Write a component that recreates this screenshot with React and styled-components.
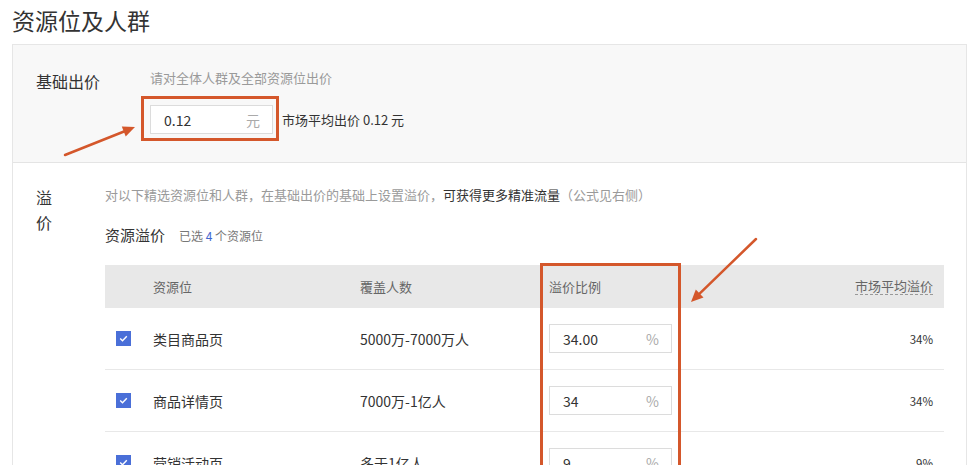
import React from "react";
import styled, { createGlobalStyle } from "styled-components";

const Global = createGlobalStyle`
  html, body { margin: 0; padding: 0; background: #fff; overflow: hidden; }
  body { font-family: "Noto Sans CJK SC", "Noto Sans", sans-serif; color: #333; }
  * { box-sizing: border-box; }
`;

const Page = styled.div`
  position: relative;
  width: 974px;
  height: 465px;
  padding: 4px 8px 0 12px;
`;

const Title = styled.h1`
  margin: 0 0 8px;
  font-size: 23px;
  line-height: 32px;
  font-weight: 400;
  color: #333;
`;

const Panel = styled.div`
  width: 955px;
  border: 1px solid #e6e6e6;
  border-bottom: none;
`;

const BaseSection = styled.div`
  display: grid;
  grid-template-columns: 114px 1fr;
  background: #f8f8f8;
  border-bottom: 1px solid #e4e4e4;
  padding: 24px 0 28px 23px;
`;

const Label = styled.div`
  font-size: 16px;
  line-height: 24px;
  color: #333;
`;

const VLabel = styled.div`
  font-size: 16px;
  line-height: 25px;
  width: 16px;
  color: #333;
`;

const Hint = styled.div`
  font-size: 13px;
  line-height: ${(p) => p.$lh || 18}px;
  color: #9a9a9a;
`;

const Strong = styled.span`
  color: #333;
`;

const InputRow = styled.div`
  display: flex;
  align-items: center;
  gap: 9px;
  margin-top: 18px;
`;

const InputBox = styled.div`
  display: flex;
  align-items: center;
  justify-content: space-between;
  width: ${(p) => p.$w || 123}px;
  height: 29px;
  border: 1px solid #dcdcdc;
  background: #fff;
  padding: 0 12px 0 13px;
  font-size: 14px;
  color: #333;
`;

const Unit = styled.span`
  color: #aaa;
  font-size: 14px;
`;

const MarketText = styled.span`
  font-size: 13px;
  color: #333;
`;

const PremiumSection = styled.div`
  display: grid;
  grid-template-columns: 69px 1fr;
  padding: 22px 21px 0 23px;
`;

const SubHead = styled.div`
  display: flex;
  align-items: baseline;
  gap: 14px;
  margin-top: 20px;
  line-height: 20px;
`;

const SubTitle = styled.span`
  font-size: 15px;
  color: #333;
`;

const SubNote = styled.span`
  font-size: 12px;
  color: #777;
`;

const Blue = styled.span`
  color: #3f66d0;
`;

const Table = styled.div`
  margin-top: 19px;
  width: 839px;
`;

const RowGrid = styled.div`
  display: grid;
  grid-template-columns: 48px 207px 189px 1fr auto;
  align-items: center;
  padding-right: 11px;
`;

const HeadRow = styled(RowGrid)`
  height: 43px;
  background: #e8e8e8;
  font-size: 13px;
  color: #666;
`;

const BodyRow = styled(RowGrid)`
  height: 62px;
  border-bottom: 1px solid #e8e8e8;
  font-size: 14px;
  color: #333;
`;

const Dashed = styled.span`
  border-bottom: 1px dashed #999;
  line-height: 16px;
`;

const Pct = styled.span`
  font-size: 11.5px;
  color: #333;
`;

const CheckCell = styled.div`
  display: flex;
  justify-content: flex-start;
  padding-left: 11px;
`;

const Checkbox = styled.span`
  display: inline-flex;
  align-items: center;
  justify-content: center;
  width: 15px;
  height: 15px;
  background: #4a6fd8;
`;

const Overlay = styled.svg`
  position: absolute;
  left: 0;
  top: 0;
  pointer-events: none;
`;

const rows = [
  { name: "类目商品页", count: "5000万-7000万人", ratio: "34.00", market: "34%" },
  { name: "商品详情页", count: "7000万-1亿人", ratio: "34", market: "34%" },
  { name: "营销活动页", count: "多于1亿人", ratio: "9", market: "9%" },
];

const Check = () => (
  <Checkbox>
    <svg width="11" height="11" viewBox="0 0 11 11">
      <polyline points="2.2,5.6 4.5,7.8 8.8,3.2" fill="none" stroke="#fff" strokeWidth="1.4" />
    </svg>
  </Checkbox>
);

export default function App() {
  const orange = "#d4572b";
  return (
    <>
      <Global />
      <Page>
        <Title>资源位及人群</Title>
        <Panel>
          <BaseSection>
            <Label>基础出价</Label>
            <div>
              <Hint>请对全体人群及全部资源位出价</Hint>
              <InputRow>
                <InputBox>
                  <span>0.12</span>
                  <Unit>元</Unit>
                </InputBox>
                <MarketText>市场平均出价 0.12 元</MarketText>
              </InputRow>
            </div>
          </BaseSection>
          <PremiumSection>
            <VLabel>溢价</VLabel>
            <div>
              <Hint $lh={20}>
                对以下精选资源位和人群，在基础出价的基础上设置溢价，<Strong>可获得更多精准流量</Strong>（公式见右侧）
              </Hint>
              <SubHead>
                <SubTitle>资源溢价</SubTitle>
                <SubNote>
                  已选 <Blue>4</Blue> 个资源位
                </SubNote>
              </SubHead>
              <Table>
                <HeadRow>
                  <span />
                  <span>资源位</span>
                  <span>覆盖人数</span>
                  <span>溢价比例</span>
                  <Dashed>市场平均溢价</Dashed>
                </HeadRow>
                {rows.map((r) => (
                  <BodyRow key={r.name}>
                    <CheckCell>
                      <Check />
                    </CheckCell>
                    <span>{r.name}</span>
                    <span>{r.count}</span>
                    <div>
                      <InputBox>
                        <span>{r.ratio}</span>
                        <Unit>%</Unit>
                      </InputBox>
                    </div>
                    <Pct>{r.market}</Pct>
                  </BodyRow>
                ))}
              </Table>
            </div>
          </PremiumSection>
        </Panel>
        <Overlay width="974" height="465" viewBox="0 0 974 465">
          <rect x="142.5" y="97.5" width="135" height="42" fill="none" stroke={orange} strokeWidth="3" />
          <rect x="541.5" y="264.5" width="138" height="220" fill="none" stroke={orange} strokeWidth="3" />
          <line x1="65" y1="155" x2="124" y2="131.5" stroke={orange} strokeWidth="2.5" strokeLinecap="round" />
          <polygon points="135,127 125.7,136.6 121.8,126.6" fill={orange} />
          <line x1="756" y1="239" x2="699.6" y2="293.6" stroke={orange} strokeWidth="2.5" strokeLinecap="round" />
          <polygon points="691,302 703.5,297.6 695.8,289.6" fill={orange} />
        </Overlay>
      </Page>
    </>
  );
}
